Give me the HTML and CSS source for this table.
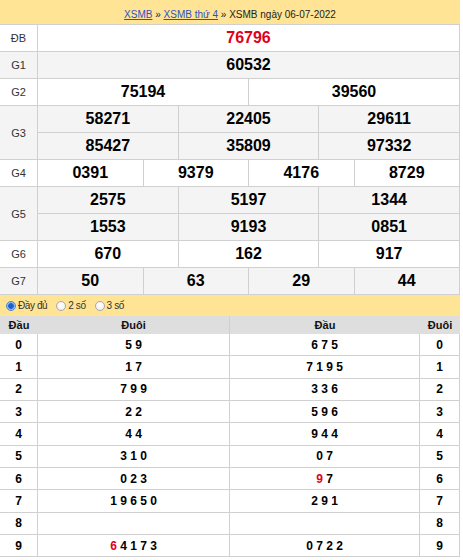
FILE: index.html
```html
<!DOCTYPE html>
<html>
<head>
<meta charset="utf-8">
<link rel="stylesheet" href="styles.css">
</head>
<body>
<div class="wrap">
  <div class="crumb"><a href="#">XSMB</a> » <a href="#">XSMB thứ 4</a> » XSMB ngày 06-07-2022</div>
  <div class="prizes">
    <div class="lbl">ĐB</div><div class="c s12 db">76796</div>
    <div class="lbl alt">G1</div><div class="c s12 alt">60532</div>
    <div class="lbl">G2</div><div class="c s6">75194</div><div class="c s6">39560</div>
    <div class="lbl alt r2">G3</div><div class="c s4 alt">58271</div><div class="c s4 alt">22405</div><div class="c s4 alt">29611</div>
    <div class="c s4 alt">85427</div><div class="c s4 alt">35809</div><div class="c s4 alt">97332</div>
    <div class="lbl">G4</div><div class="c s3">0391</div><div class="c s3">9379</div><div class="c s3">4176</div><div class="c s3">8729</div>
    <div class="lbl alt r2">G5</div><div class="c s4 alt">2575</div><div class="c s4 alt">5197</div><div class="c s4 alt">1344</div>
    <div class="c s4 alt">1553</div><div class="c s4 alt">9193</div><div class="c s4 alt">0851</div>
    <div class="lbl">G6</div><div class="c s4">670</div><div class="c s4">162</div><div class="c s4">917</div>
    <div class="lbl alt">G7</div><div class="c s3 alt">50</div><div class="c s3 alt">63</div><div class="c s3 alt">29</div><div class="c s3 alt">44</div>
  </div>
  <div class="opts">
    <label class="opt o1"><span class="radio on"></span><span>Đầy đủ</span></label>
    <label class="opt o2"><span class="radio"></span><span>2 số</span></label>
    <label class="opt o3"><span class="radio"></span><span>3 số</span></label>
  </div>
  <div class="loto">
    <div class="lt left">
      <div class="h">Đầu</div><div class="h edge">Đuôi</div>
      <div class="k">0</div><div class="v">5 9</div>
      <div class="k">1</div><div class="v">1 7</div>
      <div class="k">2</div><div class="v">7 9 9</div>
      <div class="k">3</div><div class="v">2 2</div>
      <div class="k">4</div><div class="v">4 4</div>
      <div class="k">5</div><div class="v">3 1 0</div>
      <div class="k">6</div><div class="v">0 2 3</div>
      <div class="k">7</div><div class="v">1 9 6 5 0</div>
      <div class="k">8</div><div class="v"></div>
      <div class="k">9</div><div class="v"><span><span class="red">6</span> 4 1 7 3</span></div>
    </div>
    <div class="lt right">
      <div class="h">Đầu</div><div class="h">Đuôi</div>
      <div class="v">6 7 5</div><div class="k">0</div>
      <div class="v">7 1 9 5</div><div class="k">1</div>
      <div class="v">3 3 6</div><div class="k">2</div>
      <div class="v">5 9 6</div><div class="k">3</div>
      <div class="v">9 4 4</div><div class="k">4</div>
      <div class="v">0 7</div><div class="k">5</div>
      <div class="v"><span><span class="red">9</span> 7</span></div><div class="k">6</div>
      <div class="v">2 9 1</div><div class="k">7</div>
      <div class="v"></div><div class="k">8</div>
      <div class="v">0 7 2 2</div><div class="k">9</div>
    </div>
  </div>
</div>
</body>
</html>
```

FILE: styles.css
```css
* { box-sizing: border-box; }
html, body { margin: 0; padding: 0; background: #fff; }
body { font-family: "Liberation Sans", Arial, sans-serif; color: #000; }
.wrap { width: 460px; }

.crumb {
  height: 24px;
  padding-top: 5px;
  line-height: 19px;
  font-size: 10px;
  text-align: center;
  background: #ffe495;
  color: #222;
  white-space: nowrap;
}
.crumb a { color: #2b52c4; text-decoration: underline; }

.prizes {
  display: grid;
  grid-template-columns: 38px repeat(12, 1fr);
  grid-auto-rows: 27px;
  border-top: 1px solid #d0d0d0;
}
.prizes > div {
  border-right: 1px solid #d0d0d0;
  border-bottom: 1px solid #d0d0d0;
  display: flex;
  align-items: center;
  justify-content: center;
  background: #fff;
}
.prizes > .alt { background: #f4f4f4; }
.lbl { font-size: 11px; color: #333; }
.r2 { grid-row: span 2; }
.c { font-size: 16px; font-weight: bold; color: #000; }
.s12 { grid-column: span 12; }
.s6 { grid-column: span 6; }
.s4 { grid-column: span 4; }
.s3 { grid-column: span 3; }
.prizes > .db { color: #e1001a; }

.opts {
  height: 21px;
  background: #ffe495;
  display: flex;
  align-items: center;
  font-size: 10px;
  letter-spacing: -0.4px;
  color: #333;
}
.opt { display: inline-flex; align-items: center; gap: 2px; }
.o1 { margin-left: 6px; }
.o2 { margin-left: 9px; }
.o3 { margin-left: 9px; }
.radio {
  width: 10px;
  height: 10px;
  border-radius: 50%;
  border: 1px solid #a9a9a9;
  background: radial-gradient(circle at 50% 35%, #ffffff 0%, #f2f2f2 70%, #dcdcdc 100%);
}
.radio.on {
  border-color: #4a7fd0;
  background: radial-gradient(circle, #1d5fcc 0 2.5px, #6fa2ea 3px, #d6e6fb 4.5px);
}

.loto { display: flex; }
.lt { display: grid; width: 230px; grid-template-rows: 18px repeat(10, 22.33px); }
.left { grid-template-columns: 38px 1fr; }
.right { grid-template-columns: 1fr 40px; }
.lt > div {
  display: flex;
  align-items: center;
  justify-content: center;
  font-weight: bold;
  font-size: 12px;
}
.lt > .h { background: #dedede; font-size: 11px; color: #111; }
.lt > .h.edge { border-right: 1px solid #cfcfcf; }
.lt > .k, .lt > .v { border-right: 1px solid #d0d0d0; border-bottom: 1px solid #d0d0d0; }
.red { color: #e1001a; }
```
